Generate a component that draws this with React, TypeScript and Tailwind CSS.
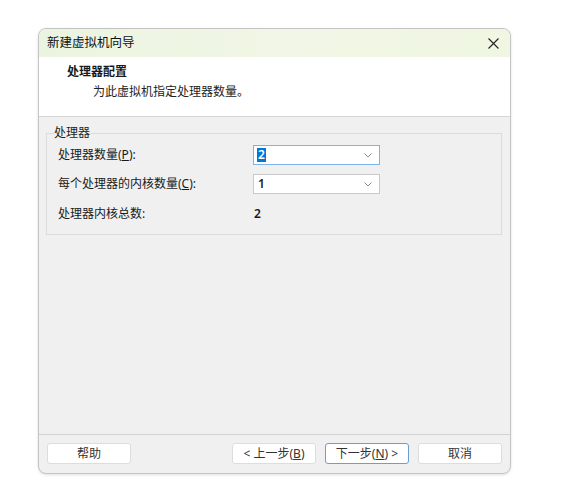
import { useState } from "react";

function Combo({ value, focused }: { value: string; focused?: boolean }) {
  return (
    <div
      className={
        "w-[127px] h-[20px] bg-white flex items-center justify-between pl-[3px] pr-[7px] border " +
        (focused ? "border-[#7eb4ea]" : "border-[#c9c9c9]")
      }
    >
      {focused ? (
        <span className="bg-[#0078d7] text-white px-[1px] leading-[14px] font-semibold">{value}</span>
      ) : (
        <span className="font-semibold px-[1px]">{value}</span>
      )}
      <svg width="8" height="5" viewBox="0 0 8 5" fill="none">
        <path d="M0.5 0.5 L4 4 L7.5 0.5" stroke="#8a8a8a" strokeWidth="1" />
      </svg>
    </div>
  );
}

function Btn({ children, primary }: { children: React.ReactNode; primary?: boolean }) {
  return (
    <button
      className={
        "w-[84px] h-[21px] bg-white rounded-[3px] border text-[12px] text-[#333] flex items-center justify-center " +
        (primary ? "border-[#6a9fd4]" : "border-[#dddddd]")
      }
    >
      {children}
    </button>
  );
}

export default function App() {
  const [count] = useState("2");
  const [cores] = useState("1");

  return (
    <div
      className="w-[562px] h-[500px] bg-white pt-[28px] pl-[38px] text-[12px] text-[#1a1a1a]"
      style={{ fontFamily: '"Noto Sans", "Noto Sans CJK SC", sans-serif' }}
    >
      <div className="w-[473px] h-[446px] border border-[#c4c4c4] rounded-[8px] overflow-hidden flex flex-col bg-[#f0f0f0] shadow-[0_1px_3px_rgba(0,0,0,0.12)]">
        {/* Title bar */}
        <div className="h-[28px] shrink-0 flex items-center justify-between pl-[8px] pr-[11px] bg-[linear-gradient(90deg,#ebf4e1,#f2f6e6_60%,#eff6e2)]">
          <span className="text-[12.5px] text-[#111]">新建虚拟机向导</span>
          <svg width="11" height="11" viewBox="0 0 11 11">
            <path d="M0.5 0.5 L10.5 10.5 M10.5 0.5 L0.5 10.5" stroke="#222" strokeWidth="1.1" />
          </svg>
        </div>

        {/* Header */}
        <div className="h-[60px] shrink-0 bg-white border-b border-[#d5d5d5] pl-[28px] pt-[6px]">
          <div className="font-bold leading-[18px]">处理器配置</div>
          <div className="pl-[26px] pt-[2px] leading-[18px] text-[#222]">为此虚拟机指定处理器数量。</div>
        </div>

        {/* Body */}
        <div className="flex-1 pt-[9px] pl-[7px] pr-[8px]">
          <fieldset className="border border-[#dcdcdc] pl-[11px] pb-[10px]">
            <legend className="-ml-[4px] -mb-[1px] px-0 leading-[14px] text-[#222]">处理器</legend>
            <div className="flex flex-col mt-[6px]">
              <div className="h-[20px] flex items-center">
                <span className="w-[195px]">
                  处理器数量(<span className="underline">P</span>):
                </span>
                <Combo value={count} focused />
              </div>
              <div className="h-[20px] flex items-center mt-[9px]">
                <span className="w-[195px]">
                  每个处理器的内核数量(<span className="underline">C</span>):
                </span>
                <Combo value={cores} />
              </div>
              <div className="h-[20px] flex items-center mt-[10px]">
                <span className="w-[196px]">处理器内核总数:</span>
                <span className="font-semibold">2</span>
              </div>
            </div>
          </fieldset>
        </div>

        {/* Footer */}
        <div className="h-[39px] shrink-0 border-t border-[#d2d2d2] flex items-start pt-[8px] pl-[8px] pr-[8px]">
          <Btn>帮助</Btn>
          <div className="flex-1" />
          <div className="flex gap-[9px]">
            <Btn>
              &lt; 上一步(<span className="underline">B</span>)
            </Btn>
            <Btn primary>
              下一步(<span className="underline">N</span>) &gt;
            </Btn>
            <Btn>取消</Btn>
          </div>
        </div>
      </div>
    </div>
  );
}
